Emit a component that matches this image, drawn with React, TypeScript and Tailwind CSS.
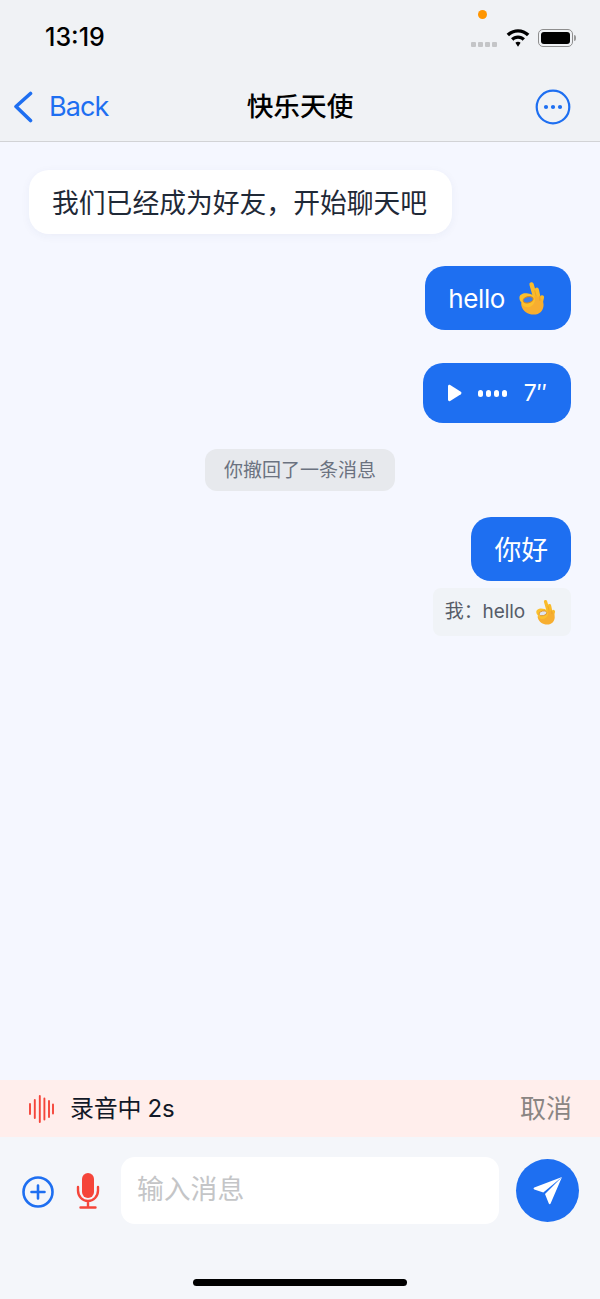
import React from "react";

const CJK = { fontFamily: '"Inter","Noto Sans CJK SC",sans-serif' };

function OkHand({ w, h, hole }: { w: number; h: number; hole: string }) {
  return (
    <svg width={w} height={h} viewBox="7.500 6.500 26.500 34.500" className="shrink-0">
      <g stroke="#f9bb2b" strokeLinecap="round" fill="none">
        <path d="M20.800 10 24 21" strokeWidth="4.400" />
        <path d="M26 15.500 28 25" strokeWidth="4.600" />
        <path d="M31.400 23 30 29" strokeWidth="4.200" />
      </g>
      <path d="M23 40.500c-6 0-11-3.500-12.500-9-.6-2.400.5-4 2.500-4.500 3-.7 7-2 9-5l6 .5c3 1 5 4 5 8 0 6-4 10-10 10z" fill="#f7ae30" />
      <path d="M8.500 23.500c0-2.700 3-4.500 6-4.500 3.500 0 7.500 1 9 3.500.9 1.500 1 3.500.5 5-1.200 4-4.800 6-8.500 5.500-3-.4-5-2.800-5-4.800-1.200-1-2-2.800-2-4.700z" fill="#fbc02d" />
      <ellipse cx="17.300" cy="25.500" rx="5.200" ry="3.100" transform="rotate(-14 17.300 25.500)" fill={hole} stroke="#d98a1f" strokeWidth="1" />
      <path d="M24 16 25.500 22M29 21.500l.3 5" stroke="#e59a24" strokeWidth=".7" fill="none" />
    </svg>
  );
}

function Wifi() {
  return (
    <svg width="24" height="18" viewBox="0 0 23 17">
      <path d="M11.500 0C7.300 0 3.500 1.700.6 4.400l2.300 2.400C5.100 4.700 8.100 3.300 11.500 3.300s6.400 1.400 8.600 3.500l2.300-2.400C19.500 1.700 15.700 0 11.500 0z" fill="#000" />
      <path d="M11.500 6c-2.600 0-5 1-6.700 2.700l2.300 2.400c1.200-1.100 2.700-1.800 4.400-1.800s3.200.7 4.400 1.800l2.300-2.400C16.500 7 14.100 6 11.500 6z" fill="#000" />
      <path d="M11.500 12c-1 0-1.800.4-2.500 1l2.500 3.800L14 13c-.7-.6-1.500-1-2.500-1z" fill="#000" />
    </svg>
  );
}

function Battery() {
  return (
    <div className="flex items-center">
      <div className="w-[35px] h-[18px] rounded-[5px] border border-[#8e8e8e] p-[2px]">
        <div className="w-full h-full rounded-[3px] bg-black" />
      </div>
      <div className="w-[2px] h-[6px] rounded-r-sm bg-[#9a9a9a] ml-[1px]" />
    </div>
  );
}

export default function App() {
  return (
    <div className="w-[600px] h-[1299px] flex flex-col bg-[#f5f7ff] overflow-hidden" style={CJK}>
      <header className="h-[142px] shrink-0 bg-[#f0f2f5] border-b border-[#d2d3d6] flex flex-col">
        <div className="h-[72px] flex items-start justify-between pl-[45px] pr-[24px] relative">
          <span className="mt-[22px] text-[25px] leading-[30px] font-medium text-black">13:19</span>
          <div className="absolute left-[478px] top-[10px] w-[9px] h-[9px] rounded-full bg-[#ff9500]" />
          <div className="mt-[28px] flex items-center">
            <div className="flex gap-[2px] mt-[14px] mr-[9px]">
              <i className="w-[5px] h-[5px] rounded-[1px] bg-[#c4c5c7]" />
              <i className="w-[5px] h-[5px] rounded-[1px] bg-[#c4c5c7]" />
              <i className="w-[5px] h-[5px] rounded-[1px] bg-[#c4c5c7]" />
              <i className="w-[5px] h-[5px] rounded-[1px] bg-[#c4c5c7]" />
            </div>
            <div className="mr-[8px]"><Wifi /></div>
            <Battery />
          </div>
        </div>
        <div className="flex-1 flex items-center justify-between pl-[12px] pr-[29px] relative">
          <div className="flex items-center gap-[15px] text-[#1e6ff1]">
            <svg width="22" height="32" viewBox="0 0 22 32" fill="none" stroke="currentColor" strokeWidth="3.600" strokeLinecap="round" strokeLinejoin="round">
              <path d="M18.500 2.500 4 15.500l14.500 14" />
            </svg>
            <span className="text-[27px] leading-[32px] tracking-[-0.900px]">Back</span>
          </div>
          <span className="absolute left-0 right-0 text-center text-[26.700px] leading-[34px] font-medium text-black pb-[2px] pointer-events-none">快乐天使</span>
          <svg width="36" height="36" viewBox="0 0 36 36" fill="none">
            <circle cx="18" cy="18" r="16.300" stroke="#1e6ff1" strokeWidth="2.200" />
            <circle cx="11" cy="18" r="2.100" fill="#1e6ff1" />
            <circle cx="18" cy="18" r="2.100" fill="#1e6ff1" />
            <circle cx="25" cy="18" r="2.100" fill="#1e6ff1" />
          </svg>
        </div>
      </header>

      <main className="flex-1 flex flex-col pt-[28px] px-[29px]">
        <div className="self-start h-[64px] pl-[23px] pr-[25px] pt-[2px] rounded-[20px] bg-white flex items-center text-[26.800px] text-[#1f2937] shadow-[0_2px_10px_rgba(30,60,120,0.05)]">
          我们已经成为好友，开始聊天吧
        </div>
        <div className="self-end mt-[32px] h-[64px] pl-[23px] pr-[26px] gap-[13px] rounded-[20px] bg-[#1e6ff1] text-white flex items-center text-[26px]">
          <span className="tracking-[-0.400px]">hello</span>
          <OkHand w={27} h={34} hole="#3f7fe8" />
        </div>
        <div className="self-end mt-[33px] h-[60px] px-[24px] rounded-[20px] bg-[#1e6ff1] text-white flex items-center">
          <svg width="15" height="18" viewBox="0 0 15 18" fill="#fff"><path d="M1 2.200C1 1 2.200.4 3.200 1l10.600 6.800c.9.600.9 1.800 0 2.400L3.200 17c-1 .6-2.200 0-2.200-1.200z" /></svg>
          <div className="flex gap-[3px] ml-[16px] mr-[17px]">
            <i className="w-[5px] h-[7px] rounded-full bg-white" />
            <i className="w-[5px] h-[7px] rounded-full bg-white" />
            <i className="w-[5px] h-[7px] rounded-full bg-white" />
            <i className="w-[5px] h-[7px] rounded-full bg-white" />
          </div>
          <span className="text-[23px] leading-[30px]">7″</span>
        </div>
        <div className="self-center mt-[26px] h-[42px] px-[19px] pt-[2px] rounded-[12px] bg-[#e7e9ed] text-[#6b7280] text-[19px] flex items-center">
          你撤回了一条消息
        </div>
        <div className="self-end mt-[26px] h-[64px] px-[23px] pt-[2px] rounded-[20px] bg-[#1e6ff1] text-white flex items-center text-[26.800px]">
          你好
        </div>
        <div className="self-end mt-[7px] h-[48px] pl-[12px] pr-[15px] rounded-[8px] bg-[#f0f3f7] text-[#565c68] text-[19px] flex items-center gap-[10px]">
          <span className="tracking-[-0.100px]">我：hello</span>
          <OkHand w={21} h={26} hole="#dfe4ee" />
        </div>
      </main>

      <div className="h-[57px] shrink-0 bg-[#ffeeec] flex items-center px-[28px]">
        <svg width="26" height="28" viewBox="0 0 26 28" stroke="#f5453a" strokeWidth="1.900" strokeLinecap="round">
          <path d="M2 9v10M6.800 5v18M11.800 1v26M16.400 3.500v21M21 6v16M25 9.500v9" />
        </svg>
        <span className="ml-[16px] text-[24px] text-[#111827] tracking-[-0.300px]">录音中 2s</span>
        <span className="ml-auto text-[26px] text-[#8a8583]">取消</span>
      </div>

      <footer className="h-[162px] shrink-0 bg-[#f4f6fa] flex flex-col">
        <div className="flex items-start pt-[20px] pl-[22px]">
          <svg className="mt-[19px]" width="32" height="32" viewBox="0 0 32 32" fill="none" stroke="#1e6ff1" strokeWidth="2.600" strokeLinecap="round">
            <circle cx="16" cy="16" r="14.500" />
            <path d="M16 9.500v13M9.500 16h13" />
          </svg>
          <svg className="ml-[22px] mt-[16px]" width="24" height="36" viewBox="0 0 24 36" fill="none">
            <rect x="6" y="0" width="12" height="25" rx="6" fill="#f5453a" />
            <path d="M2 14v3.500C2 23.500 6.500 28 12 28s10-4.500 10-10.500V14M12 28v6.500M4.500 34.500h15" stroke="#f5453a" strokeWidth="2.400" strokeLinecap="round" />
          </svg>
          <div className="ml-[21px] h-[67px] w-[378px] rounded-[14px] bg-white flex items-center pl-[16px] pb-[2px] text-[26.800px] text-[#c4c5c7]">
            输入消息
          </div>
          <div className="ml-[17px] mt-[2px] w-[63px] h-[63px] rounded-full bg-[#1e6ff1] flex items-center justify-center">
            <svg width="30" height="30" viewBox="0 0 30 30" fill="#fff">
              <path d="M29 1 1.300 11.500c-1 .5-1 1.500 0 2l9 3z" />
              <path d="M29 1 12 18l3.800 9.500c.5 1 1.400 1 1.800 0z" />
            </svg>
          </div>
        </div>
        <div className="mt-auto mb-[13px] self-center w-[214px] h-[7px] rounded-full bg-black" />
      </footer>
    </div>
  );
}
